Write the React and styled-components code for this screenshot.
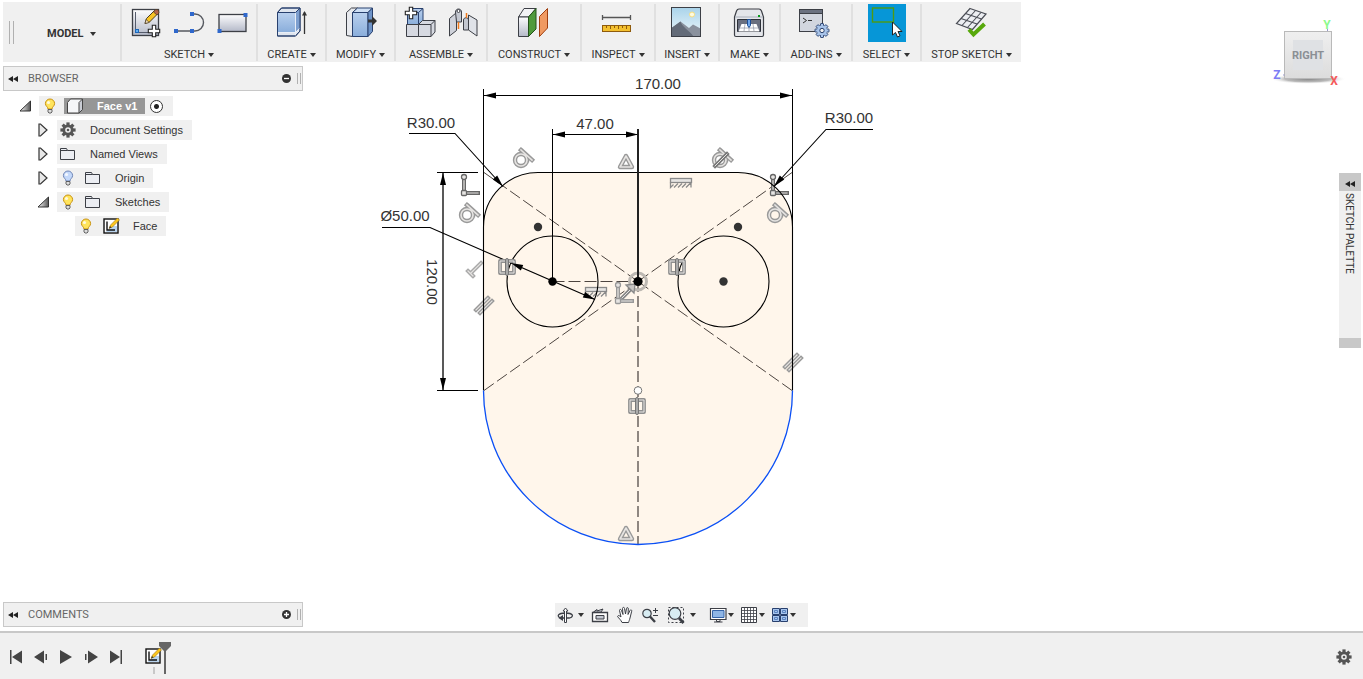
import styled, {createGlobalStyle} from 'styled-components';

const GlobalStyle = createGlobalStyle`
    * {
        box-sizing: border-box;
    }

    body {
        margin: 0;
        background: #fff;
        color: #333;
        font-family: 'Liberation Sans', Arial, sans-serif;
        font-size: 11px;
    }

    svg {
        display: block;
        flex: none;
    }

    button {
        padding: 0;
        border: 0;
        background: none;
        color: inherit;
        font: inherit;
        cursor: pointer;
    }
`;

const Page = styled.div`
    display: flex;
    flex-direction: column;
    min-height: 100vh;
`;

const Workspace = styled.main`
    flex: 1;
    display: grid;
    grid-template-columns: 303px 1fr 303px;
    grid-template-rows: auto 1fr;
`;

/* ---------- toolbar ---------- */

const Toolbar = styled.header`
    grid-column: 1 / 3;
    justify-self: start;
    display: flex;
    height: 60px;
    margin: 2px 3px 4px;
    padding: 2px 0 1px;
    background: #f0f0f0;
`;

const WorkspacePicker = styled.div`
    display: flex;
    align-items: center;
    width: 117px;
    padding-left: 6px;
`;

const Grip = styled.span`
    width: ${({$wide}) => ($wide ? 5 : 4)}px;
    height: ${({$wide}) => ($wide ? 23 : 11)}px;
    border: solid #b0b0b0;
    border-width: 0 1px;
`;

const ModelButton = styled.button`
    display: flex;
    align-items: center;
    gap: 6px;
    margin-left: 33px;
    padding-top: 2px;
    font-family: Roboto, sans-serif;
    font-weight: bold;
`;

const Group = styled.section`
    display: flex;
    flex-direction: column;
    align-items: center;
    width: ${({$width}) => $width}px;
    border-left: 2px solid #e0e0e0;
`;

const GroupIcons = styled.div`
    display: flex;
    gap: 5px;
`;

const ToolButton = styled.button`
    width: 38px;
    height: 38px;
    background: ${({$active}) => ($active ? '#0696d7' : 'none')};
`;

const GroupLabel = styled.button`
    display: flex;
    align-items: center;
    gap: 3px;
    margin-top: 7px;
    font-family: Roboto, sans-serif;
    line-height: 12px;
    white-space: nowrap;
`;

const Caret = styled.span`
    border: 3px solid transparent;
    border-top: 4px solid #333;
    border-bottom: 0;
`;

/* ---------- side panels ---------- */

const Side = styled.aside`
    display: flex;
    flex-direction: column;
    justify-content: space-between;
    padding: 0 0 4px 3px;
`;

const PanelHeader = styled.div`
    display: flex;
    align-items: center;
    height: 25px;
    padding: 0 1px 0 4px;
    border: 1px solid #c8c8c8;
    background: #f0f0f0;
`;

const PanelTitle = styled.h2`
    flex: 1;
    margin: 0 0 0 10px;
    color: #666;
    font-family: Roboto, sans-serif;
    font-size: 11px;
    font-weight: normal;
`;

const PanelToggle = styled.button`
    margin-right: 6px;
`;

const Tree = styled.ul`
    display: flex;
    flex-direction: column;
    gap: 4px;
    margin: 5px 0 0;
    padding: 0;
    list-style: none;
`;

const TreeRow = styled.li`
    display: flex;
    align-items: center;
    height: 20px;
    padding-left: ${({$depth}) => 13 + $depth * 18}px;
`;

const Expander = styled.span`
    display: flex;
    justify-content: center;
    width: 18px;
    margin-right: 5px;
`;

const Pill = styled.div`
    display: flex;
    align-items: center;
    gap: 3px;
    height: 20px;
    padding-right: 9px;
    background: #f0f0f0;
`;

const Slot = styled.span`
    display: flex;
    justify-content: center;
    width: 22px;
`;

const NodeName = styled.span`
    margin-left: 8px;
    white-space: nowrap;
`;

const RootNode = styled.span`
    display: flex;
    align-items: center;
    gap: 3px;
    height: 16px;
    padding-right: 8px;
    background: #969696;
    color: #fff;
    font-weight: bold;
`;

const ActivateRadio = styled.input`
    appearance: none;
    width: 13px;
    height: 13px;
    margin: 0 1px 0 2px;
    border: 1px solid #333;
    border-radius: 50%;
    background: radial-gradient(circle, #222 0 2px, #fff 3px);
`;

/* ---------- canvas ---------- */

const Canvas = styled.section`
    display: flex;
    flex-direction: column;
    align-items: center;
    justify-content: space-between;
    padding-bottom: 4px;
`;

const NavBar = styled.nav`
    display: flex;
    align-items: center;
    gap: 13px;
    height: 24px;
    padding: 0 12px 0 1px;
    background: #f0f0f0;
`;

const NavGroup = styled.div`
    display: flex;
    align-items: center;
    gap: ${({$gap}) => $gap}px;
`;

const NavButton = styled.button`
    display: flex;
    align-items: center;
    gap: ${({$gap}) => $gap}px;
`;

const RightSide = styled.aside`
    grid-column: 3;
    grid-row: 1 / 3;
    display: flex;
    flex-direction: column;
    align-items: flex-end;
    padding: 15px 2px 0 0;
`;

const CubeButton = styled.button`
    margin: 0 16px 83px 0;
`;

const Palette = styled.section`
    display: flex;
    flex-direction: column;
    align-items: center;
    width: 22px;
    height: 175px;
    border-bottom: 10px solid #c8c8c8;
    background: #f0f0f0;
`;

const PaletteToggle = styled.button`
    display: flex;
    align-items: center;
    justify-content: center;
    width: 22px;
    height: 18px;
    padding-top: 3px;
    background: #c8c8c8;
`;

const PaletteTitle = styled.h2`
    margin: 2px 2px 0 0;
    font-family: Roboto, sans-serif;
    font-size: 10px;
    font-weight: normal;
    line-height: 14px;
    writing-mode: vertical-rl;
`;

/* ---------- timeline ---------- */

const Timeline = styled.footer`
    display: flex;
    align-items: center;
    height: 48px;
    padding: 2px 11px 0 4px;
    border-top: 2px solid #c8c8c8;
    background: #f0f0f0;
`;

const Playback = styled.div`
    display: flex;
    gap: 1px;
`;

const PlayButton = styled.button`
    display: flex;
    justify-content: center;
    width: 24px;
`;

const Features = styled.div`
    flex: 1;
    padding-left: 16px;
`;

/* ---------- icons ---------- */

const dark = '#3c3f46';
const navy = '#28406e';

const Gradients = () => (
    <svg width="0" height="0" aria-hidden="true">
        <defs>
            <linearGradient id="steel" x1="0" y1="0" x2="0" y2="1">
                <stop offset="0" stopColor="#fdfdfe"/>
                <stop offset="1" stopColor="#b4b9c8"/>
            </linearGradient>
            <linearGradient id="blue" x1="0" y1="0" x2="0" y2="1">
                <stop offset="0" stopColor="#b9d0ee"/>
                <stop offset="1" stopColor="#8aaedb"/>
            </linearGradient>
            <linearGradient id="sky" x1="0" y1="0" x2="0" y2="1">
                <stop offset="0" stopColor="#a9d3ea"/>
                <stop offset="1" stopColor="#eef7fa"/>
            </linearGradient>
            <linearGradient id="cube" x1="0" y1="0" x2="0" y2="1">
                <stop offset="0" stopColor="#efefef"/>
                <stop offset="1" stopColor="#dcdcdc"/>
            </linearGradient>
            <linearGradient id="wedge" x1="0" y1="0" x2="1" y2="0">
                <stop offset="0" stopColor="#fff"/>
                <stop offset="1" stopColor="#555"/>
            </linearGradient>
            <radialGradient id="shadow">
                <stop offset="0" stopColor="#888"/>
                <stop offset=".6" stopColor="#bbb"/>
                <stop offset="1" stopColor="#fff" stopOpacity="0"/>
            </radialGradient>
        </defs>
    </svg>
);

const Tool = ({children}) => (
    <svg width="38" height="38" viewBox="0 0 38 38" fill="none" aria-hidden="true">{children}</svg>
);

const Plus = ({x, y}) => (
    <path transform={`translate(${x} ${y})`} fill="#fff" stroke="#222" strokeWidth="1.1"
          d="M-1.7-5.7h3.4v4h4v3.4h-4v4h-3.4v-4h-4v-3.4h4z"/>
);

const SketchIcon = () => (
    <Tool>
        <rect x="5.5" y="5.5" width="26" height="26" fill="url(#steel)" stroke={dark} strokeWidth="1.3"/>
        <path d="M8.5 8v21M12 28.5h11" stroke="#555b6b"/>
        <rect x="8.5" y="25.5" width="3" height="3" fill="#5fb0f5" stroke="#1d66b8"/>
        <path d="M18 19.500l1.500-5 8-8 3.500 3-8.500 8.500z" fill="#f7c324" stroke="#4a3a20"/>
        <path d="M26.500 8l2-2.500 3 .5.500 3-2 2z" fill="#b5654a" stroke="#4a3a20" strokeWidth=".7"/>
        <path d="M18 19.500l1.200-4 3 3z" fill="#f3e3c4" stroke="#4a3a20" strokeWidth=".7"/>
        <Plus x={27} y={27}/>
    </Tool>
);

const LineIcon = () => (
    <Tool>
        <path d="M5.5 27H25a8.500 8.500 0 0 0 0-17h-3" stroke="#55585f" strokeWidth="1.4"/>
        <path d="M4 25h4v4H4zM20 25h4v4h-4zM20 8h4v4h-4z" fill="#2f68cc"/>
    </Tool>
);

const RectangleIcon = () => (
    <Tool>
        <rect x="6" y="10.5" width="27" height="17" fill="url(#steel)" stroke={dark} strokeWidth="1.3"/>
        <path d="M30.5 9h4v4h-4zM4.500 25h4v4h-4z" fill="#2f68cc"/>
    </Tool>
);

const ExtrudeIcon = () => (
    <Tool>
        <path d="M4.5 8.500l4-4.500H27v23l-4.500 5h-18z" fill="#dfe5ee" stroke={navy}/>
        <path d="M4.5 8.500h18V28h-18z" fill="url(#blue)"/>
        <path d="M22.5 8.500L27 4v19.500L22.500 28z" fill="#7d9fcf"/>
        <path d="M4.5 28.500h18L27 24M22.500 8.500V32" stroke="#e8eef7"/>
        <path d="M4.5 8.500l4-4.500H27v23l-4.500 5h-18zM4.500 8.500h18L27 4" stroke={navy}/>
        <path d="M31.5 30V8" stroke="#333" strokeWidth="1.3"/>
        <path d="M29 11.500L31.500 7l2.500 4.500z" fill="#333"/>
    </Tool>
);

const PressPullIcon = () => (
    <Tool>
        <path d="M4.5 8.500l5-4.500h6l-5 4.500v24l-6-1z" fill="#e8eaee" stroke={dark}/>
        <path d="M10.5 8.500l5-4.500h15L26 8.500z" fill="#cfe0f5" stroke={navy}/>
        <path d="M10.5 8.500H26v24H10.500z" fill="url(#blue)" stroke={navy}/>
        <path d="M26 8.500L30.500 4v23.500l-4.500 5z" fill="#6f94c8" stroke={navy}/>
        <path d="M26 15.500h4V12l5 5-5 5v-3.500h-4z" fill="#333"/>
    </Tool>
);

const ComponentIcon = () => (
    <Tool>
        <path d="M6.5 8.500l4-4H22v12l-4 4H6.500z" fill="url(#blue)" stroke={navy}/>
        <path d="M17.5 20.500v-12L22 4.500M17.500 8.500h-8" stroke={navy}/>
        <path d="M5.5 20.500h12v12h-12z" fill="#d6d9e1" stroke={dark}/>
        <path d="M17.5 20.500l4-4H34V28l-4 4.500H17.500z" fill="#d6d9e1" stroke={dark}/>
        <path d="M17.5 20.500H30l4-4M30 20.500v12" stroke={dark}/>
        <Plus x={10} y={9}/>
    </Tool>
);

const JointIcon = () => (
    <Tool>
        <path d="M5.5 14.500l7-6v18l-7 5.500z" fill="#cfd2da" stroke={dark}/>
        <path d="M11.5 8c0-4 6-4 6 0v10h-5z" fill="#c4c8d1" stroke={dark}/>
        <circle cx="14.5" cy="7" r="1.5" fill="#fff" stroke={dark}/>
        <path d="M24.5 11l8.500 5v16l-8.500-6z" fill="#dfe2e8" stroke={dark}/>
        <path d="M19.5 16c0-3 5-3 5 0v10h-5z" fill="#c4c8d1" stroke={dark}/>
        <path d="M14.5 18v7M22.500 9v5" stroke="#f07a1c" strokeWidth="1.5"/>
    </Tool>
);

const PlaneIcon = () => (
    <Tool>
        <path d="M3.5 13L9 4.500h12L13.500 13z" fill="#f2f3f5" stroke={dark}/>
        <path d="M3.5 13h10v19.500h-10z" fill="url(#steel)" stroke={dark}/>
        <path d="M13.5 13L21 4.500V25l-7.500 7.500z" fill="#4f9a3c" stroke="#23521a"/>
        <path d="M24.5 12.500l8-8V24l-8 8.500z" fill="#f09a62" stroke="#a03f10"/>
    </Tool>
);

const MeasureIcon = () => (
    <Tool>
        <path d="M3.5 13.500h28M3.500 11v5M31.500 11v5" stroke="#555" strokeWidth="1.3"/>
        <rect x="3.5" y="21.5" width="28" height="6" fill="#f3c02f" stroke="#8f5b0c"/>
        <path d="M7.5 22v2M11.500 22v3M15.500 22v2M19.500 22v3M23.500 22v2M27.500 22v3" stroke="#8f5b0c"/>
    </Tool>
);

const CanvasIcon = () => (
    <Tool>
        <rect x="3.5" y="3.5" width="29" height="29" fill="url(#sky)"/>
        <circle cx="24" cy="10.5" r="2.5" fill="#fffbe0" stroke="#f6dd7e"/>
        <path d="M3.5 24l9-6.500L21 24l4-3.500 7.500 4v8h-29z" fill="#8a919d"/>
        <path d="M12.5 17.500c1 5 9 9 13 15h-22V24z" fill="#636b78"/>
        <rect x="3.5" y="3.5" width="29" height="29" stroke={dark}/>
    </Tool>
);

const PrinterIcon = () => (
    <Tool>
        <path d="M3.5 13l2-6c.5-1.300 1-2 2.500-2h20c1.500 0 2 .7 2.500 2l2 6v18c0 1-.5 1.500-1.500 1.500H5c-1 0-1.500-.5-1.500-1.500z"
              fill="#e4e6ea" stroke={dark} strokeWidth="1.2"/>
        <path d="M4 13h28" stroke="#aab0bb"/>
        <path d="M27 11h2v2h-2z" fill="#0a9a1c"/>
        <path d="M6.5 15.500h23v12h-23z" fill="#6a7080" stroke="#2d313a"/>
        <path d="M10.5 20h15l3 7.500h-21z" fill="#fff"/>
        <path d="M9 24h18M14 20l-1 7M18 20v7M22 20l1 7" stroke="#9aa0ac" strokeWidth=".8"/>
        <path d="M16.5 15.500h3v6l-1.500 2-1.500-2z" fill="#6ea4e8" stroke="#1e4f96"/>
    </Tool>
);

const gearTeeth = [0, 45, 90, 135, 180, 225, 270, 315];

const ScriptIcon = () => (
    <Tool>
        <rect x="2.5" y="5.5" width="23" height="22" fill="#d2d6df" stroke={dark}/>
        <path d="M2.5 5.500h23v4h-23z" fill="#6b7180" stroke={dark}/>
        <path d="M6 14l3.500 2.500L6 19M11 16.500h4" stroke="#333"/>
        <g transform="translate(25 26.5)">
            {gearTeeth.map((a) => (
                <rect key={a} x="-1.5" y="-7" width="3" height="4" rx=".5" fill="#a8c4ea" stroke={navy}
                      strokeWidth=".9" transform={`rotate(${a})`}/>
            ))}
            <circle r="5" fill="#a8c4ea"/>
            <circle r="2.2" fill="#f0f0f0" stroke={navy}/>
        </g>
    </Tool>
);

const SelectIcon = () => (
    <Tool>
        <rect x="4.5" y="4" width="21" height="14" stroke="#4f9a10" strokeWidth="1.4"/>
        <path d="M24.5 18v13l3-2.500 2 4.500 2.500-1.200-2-4.300h4z" fill="#fff" stroke="#222"/>
    </Tool>
);

const StopSketchIcon = () => (
    <Tool>
        <path d="M17 4.500L33 10 19.500 25.500l-16-6z" fill="#eceef2" stroke="#4a4d55" strokeWidth="1.2"/>
        <path d="M22.5 6.500L9 21.500M28 8.500L14.500 23.500M12.500 9.500l16 5.500M8 14.500l16 5.500" stroke="#4a4d55" strokeWidth="1.1"/>
        <path d="M16 25.500l4.500 5L31.500 20" stroke="#57a80b" strokeWidth="4"/>
    </Tool>
);

const RewindIcon = () => (
    <svg width="10" height="6" viewBox="0 0 10 6" aria-hidden="true">
        <path d="M5 0v6L0 3zM10 0v6L5 3z" fill="#222"/>
    </svg>
);

const CircleSign = ({plus}) => (
    <svg width="9" height="9" viewBox="0 0 9 9" aria-hidden="true">
        <circle cx="4.5" cy="4.5" r="4.5" fill="#333"/>
        <path d={plus ? 'M2 4.5h5M4.500 2v5' : 'M2 4.500h5'} stroke="#fff" strokeWidth="1.3"/>
    </svg>
);

const Bulb = ({off}) => (
    <svg width="12" height="16" viewBox="0 0 12 16" aria-hidden="true">
        <path d="M6 1a4.600 4.600 0 0 0-4.600 4.600C1.400 8 4 9 4 11h4c0-2 2.600-3 2.600-5.400A4.600 4.600 0 0 0 6 1z"
              fill={off ? '#c3d8fa' : '#ffe45c'} stroke={off ? '#6d84b5' : '#c9920e'}/>
        <circle cx="4.5" cy="4.5" r="1.6" fill="#fff" opacity=".8"/>
        <path d="M4 11.500h4V14l-1 1H5l-1-1z" fill="#ddd" stroke="#555" strokeWidth=".9"/>
    </svg>
);

const Folder = () => (
    <svg width="16" height="14" viewBox="0 0 16 14" aria-hidden="true">
        <path d="M.5 12.500v-11h6l1 2h7v9z" fill="#eceef3" stroke={dark}/>
        <path d="M1 3.500h6.500" stroke={dark}/>
    </svg>
);

const BodyIcon = () => (
    <svg width="16" height="16" viewBox="0 0 16 16" aria-hidden="true">
        <path d="M.5 4.500l3-3.500h12v10.500L12 15H.5z" fill="#f5f6f8" stroke="#444"/>
        <path d="M12 4.500L15.500 1v10.500L12 15z" fill="#c9ccd4" stroke="#444"/>
    </svg>
);

const Gear = () => (
    <svg width="16" height="16" viewBox="-8 -8 16 16" aria-hidden="true">
        {gearTeeth.map((a) => (
            <rect key={a} x="-1.6" y="-7.6" width="3.2" height="4" fill="#555" transform={`rotate(${a})`}/>
        ))}
        <circle r="4.2" fill="none" stroke="#555" strokeWidth="2.8"/>
        <circle r="1.3" fill="#555"/>
    </svg>
);

const SketchArt = () => (
    <>
        <rect x="1" y="1" width="14" height="14" fill="#fff" stroke="#111" strokeWidth="1.4"/>
        <path d="M8 8h6v6H2.500L8 10z" fill="#b9d4ee"/>
        <path d="M4 3.500v8.500h8" fill="none" stroke="#111" strokeWidth="1.4"/>
        <path d="M6 10.500l1.500-3.500 7-7 2 2-7 7z" fill="#fbc61e" stroke="#8a6410" strokeWidth=".5"/>
        <path d="M6 10.500l1-2.500 1.500 1.500z" fill="#333"/>
    </>
);

const SmallSketch = () => (
    <svg width="17" height="16" viewBox="0 0 17 16" aria-hidden="true"><SketchArt/></svg>
);

const Closed = () => (
    <svg width="10" height="14" viewBox="0 0 10 14" aria-hidden="true">
        <path d="M1 1h1.500L9 7l-6.500 6H1z" fill="#e8e8e8" stroke="#333" strokeWidth="1.2"/>
    </svg>
);

const Opened = () => (
    <svg width="13" height="12" viewBox="0 0 13 12" aria-hidden="true">
        <path d="M11.5 1v10H1z" fill="url(#wedge)" stroke="#333"/>
    </svg>
);

const Nav = ({width = 18, children}) => (
    <svg width={width} height="18" viewBox={`0 0 ${width} 18`} fill="none" stroke={dark} aria-hidden="true">
        {children}
    </svg>
);

const OrbitIcon = () => (
    <Nav>
        <path d="M5 12C0 10.500 2 7 9.500 7s9 3.500 4 5H5" strokeWidth="1.3"/>
        <path d="M7 9v6l-4.500-3z" fill={dark} stroke="none"/>
        <path d="M8.5 16.500V5H7l2.500-3L12 5h-1.500v11.500z" fill="#fff"/>
    </Nav>
);

const LookAtIcon = () => (
    <Nav>
        <path d="M1.5 6.500h15v9h-15z" fill="#fff" strokeWidth="1.3"/>
        <path d="M5 9.500h8V13H5z" fill="#c4c8d1"/>
        <path d="M2.5 6L6 3.500V5l6-2-2 3z" fill="#d6d9e1"/>
    </Nav>
);

const PanIcon = () => (
    <Nav>
        <path fill="#fff" d="M6 16.500c-1-2.500-3-4-4.500-6 .5-1.500 2-1 3.500.5L3.500 4.500c0-1.500 1.500-1.500 2 0L7 8.500l-.5-6c0-1.500 2-1.500 2 0l1 5.500 1-5.500c.3-1.500 2-1 1.800.5L12 8.500l2-4c.7-1.300 2-.5 1.700.7L14 12c-.5 2-1 3-1.500 4.500z"/>
    </Nav>
);

const ZoomIcon = () => (
    <Nav>
        <circle cx="6" cy="7.5" r="4.2" fill="#d8edf3" strokeWidth="1.2"/>
        <path d="M9 10.500l5 5.500" strokeWidth="2.4"/>
        <path d="M12 4.500h5M14.500 2v5M12 9.500h5"/>
    </Nav>
);

const ZoomWindowIcon = () => (
    <Nav width={20}>
        <path d="M2.5 1.500h15v15h-15z" strokeDasharray="2 2"/>
        <circle cx="9" cy="7.5" r="5.8" fill="#d8edf3" strokeWidth="1.2"/>
        <path d="M13 12l4.500 5" strokeWidth="2.8"/>
    </Nav>
);

const DisplayIcon = () => (
    <Nav>
        <path d="M1.5 2.500H17v11H1.500z" fill="#fff" strokeWidth="1.2"/>
        <path d="M3.5 4.500H15v7H3.500z" fill="#8fb6e6" stroke="#3564a8"/>
        <path d="M7.5 13.500H11v2H7.500zM5 16h8.500"/>
    </Nav>
);

const GridIcon = () => (
    <Nav>
        <path d="M1.5 1.500h15v15h-15z" fill="#fff"/>
        <path d="M4.500 1.500v15M7.500 1.500v15M10.500 1.500v15M13.500 1.500v15M1.500 4.500h15M1.500 7.500h15M1.500 10.500h15M1.500 13.500h15"
              strokeWidth=".8"/>
    </Nav>
);

const ViewportsIcon = () => (
    <Nav>
        <path d="M1.5 2.500h7v6h-7zM9.500 2.500h7v6h-7zM1.500 9.500h7v6h-7zM9.500 9.500h7v6h-7z" fill="#a9c6ee" stroke={navy}/>
        <path d="M3.5 4.500h3v2h-3zM11.500 4.500h3v2h-3zM3.500 11.500h3v2h-3zM11.500 11.500h3v2h-3z" stroke="#5b83bf"/>
    </Nav>
);

const ViewCube = () => (
    <svg width="77" height="75" viewBox="1268 15 77 75" aria-hidden="true">
        <ellipse cx="1308" cy="79" rx="38" ry="5" fill="url(#shadow)"/>
        <rect x="1284.5" y="31.5" width="47" height="47" fill="url(#cube)" stroke="#b9b9b9"/>
        <rect x="1293" y="40" width="30" height="30" fill="#dfe1e4"/>
        <g fontFamily="Roboto, sans-serif" fontWeight="bold" textAnchor="middle">
            <text x="1308" y="59" fontSize="11" fill="#8b8f94">RIGHT</text>
            <text x="1327" y="29" fontSize="12" fill="#8dfa8d">Y</text>
            <text x="1277" y="79" fontSize="12" fill="#7d7df5">Z</text>
            <text x="1334" y="85" fontSize="12" fill="#f55a5a">X</text>
        </g>
        <path d="M1283 75h1.500M1327.500 29v2" stroke="#99c"/>
    </svg>
);

/* ---------- the sketch ---------- */

// constraint marks are hollow strokes: a wide grey line with a light core
const Mark = ({d, x = 0, y = 0, color = '#999', width = 4.4}) => (
    <g transform={`translate(${x} ${y})`} fill="none" strokeLinecap="square" strokeLinejoin="round">
        <path d={d} stroke={color} strokeWidth={width}/>
        <path d={d} stroke="#e6e4e2" strokeWidth={width - 2.8}/>
    </g>
);

const tangent = 'M6 0A6 6 0 1 1-6 0A6 6 0 1 1 6 0M0-10L11 0';
const triangle = 'M0 2L-6 13H6z';
const parallel = 'M0 0L12-12M4 3L16-9';
const symmetry = 'M-2-6H-7V6H-2M2-6H7V6H2';
const corner = 'M0 0V16H14';

const Tangent = ({x, y}) => <Mark d={tangent} x={x} y={y}/>;

const Corner = ({x, y, color = '#666'}) => (
    <g>
        <Mark d={corner} x={x} y={y} color={color} width={4}/>
        <g transform={`translate(${x} ${y})`} fill="#e6e4e2" stroke={color} strokeWidth="1.3">
            <circle r="2.5"/>
            <rect x="-2.5" y="13.5" width="5" height="5" rx="1"/>
        </g>
    </g>
);

const Ruler = ({x, y}) => (
    <g transform={`translate(${x} ${y})`} fill="#e6e4e2" stroke="#8a8a8a" strokeWidth="1.3">
        <rect x=".5" y=".5" width="21" height="4"/>
        <path d="M.5 4.500v5l3-3M4 9.500l4-4M8 9.500l4-4M12 9.500l4-4M16 9.500l5-5v5" fill="none"/>
    </g>
);

const Symmetry = ({x, y}) => (
    <g>
        <Mark d={symmetry} x={x} y={y} color="#8f8f8f" width={3.8}/>
        <rect x={x - 1.5} y={y - 8.5} width="3" height="17" rx="1.5" fill="#aaa" stroke="#777"/>
    </g>
);

const Arrow = ({x, y, angle}) => (
    <path d="M0 0L-12-3V3z" fill="#000" transform={`translate(${x} ${y}) rotate(${angle})`}/>
);

const Drawing = () => (
    <svg width="623" height="490" viewBox="370 66 623 490" role="img" aria-label="Face sketch">
        <path d="M483.5 390.500V227A54.500 54.500 0 0 1 538 172.500H738A54.500 54.500 0 0 1 792.500 227V390.500A154.500 154 0 0 1 483.500 390.500z"
              fill="#fff6eb"/>
        <g fill="none" stroke="#4d4540" strokeDasharray="12 4">
            <path d="M484 172.500L638 281.500M792 172.500L638 281.500M484 390.500L638 281.500M792 390.500L638 281.500M552.500 281.500H638"/>
            <path d="M638 281V544" stroke="#8f8781" strokeWidth="2" strokeDasharray="11 4"/>
        </g>

        <Tangent x={521} y={160}/>
        <Tangent x={467} y={215}/>
        <Tangent x={720} y={160}/>
        <Mark d="M0 0L12-12" x={715} y={166} color="#777" width={3.8}/>
        <Tangent x={775} y={215}/>
        <Mark d={triangle} x={626} y={154}/>
        <Mark d={triangle} x={626} y={526}/>
        <Ruler x={670} y={178}/>
        <Ruler x={585} y={287}/>
        <Mark d="M0 0L5 5M3 2L13-8" x={468} y={271} color="#aaa" width={4}/>
        <Mark d={parallel} x={476} y={310} width={4}/>
        <Mark d={parallel} x={785} y={367} width={4}/>
        <Corner x={464} y={177}/>
        <Corner x={773} y={177}/>
        <circle cx="638" cy="281.5" r="8.5" fill="none" stroke="#bdb8b2" strokeWidth="3"/>
        <Mark d="M0 0L10-10" x={622} y={298} color="#888" width={3.8}/>
        <path d="M626 285l8 8 1-9z" fill="#c8c5c2" stroke="#888" strokeWidth="1.3"/>
        <Corner x={618} y={285} color="#999"/>

        <g fill="none" stroke="#000">
            <path d="M483.5 390.500V227A54.500 54.500 0 0 1 538 172.500H738A54.500 54.500 0 0 1 792.500 227V390.500" strokeWidth="1.1"/>
            <path d="M483.5 390.500A154.500 154 0 0 0 792.500 390.500" stroke="#0a4ff5" strokeWidth="1.3"/>
            <circle cx="552.5" cy="281.5" r="45.5" strokeWidth="1.1"/>
            <circle cx="723.5" cy="281.5" r="45.5" strokeWidth="1.1"/>
            <path d="M483.5 89V227M792.500 89V227M484 95.500H792"/>
            <path d="M552.5 129V281M553 134.500H638"/>
            <path d="M638 129V281" stroke="#222" strokeWidth="2"/>
            <path d="M437 172.500H478M437 390.500H478"/>
            <path d="M443 173V390" stroke="#222" strokeWidth="1.5"/>
            <path d="M409 133.500H455L503 186.500M873 129.500H826L774 186.500M382 227.500H430L595 299.500" strokeWidth="1.1"/>
        </g>
        <Arrow x={484} y={95.5} angle={180}/>
        <Arrow x={792} y={95.5} angle={0}/>
        <Arrow x={553} y={134.5} angle={180}/>
        <Arrow x={638} y={134.5} angle={0}/>
        <Arrow x={443} y={173} angle={-90}/>
        <Arrow x={443} y={390} angle={90}/>
        <Arrow x={503} y={186.5} angle={48}/>
        <Arrow x={774} y={186.5} angle={132}/>
        <Symmetry x={507} y={267}/>
        <Symmetry x={677} y={267}/>
        <Symmetry x={637} y={406}/>
        <Arrow x={511} y={263} angle={203}/>
        <Arrow x={595} y={299.5} angle={23}/>

        <circle cx="552.5" cy="281.5" r="4.2"/>
        <circle cx="638" cy="281.5" r="4.6"/>
        <g fill="#333">
            <circle cx="723.5" cy="281.5" r="4.2"/>
            <circle cx="538" cy="227" r="4.2"/>
            <circle cx="738" cy="227" r="4.2"/>
        </g>
        <circle cx="638" cy="390.5" r="3.8" fill="#fff" stroke="#777"/>

        <g fontFamily="'Liberation Sans', Arial, sans-serif" fontSize="15" fill="#333" textAnchor="middle">
            <text x="658" y="89">170.00</text>
            <text x="595" y="129">47.00</text>
            <text x="431" y="128">R30.00</text>
            <text x="849" y="123">R30.00</text>
            <text x="405" y="221">Ø50.00</text>
            <text transform="translate(427 282) rotate(90)">120.00</text>
        </g>
    </svg>
);

/* ---------- data ---------- */

const groups = [
    {name: 'SKETCH', width: 136, tools: [['Create sketch', SketchIcon], ['Line', LineIcon], ['Rectangle', RectangleIcon]]},
    {name: 'CREATE', width: 69, tools: [['Extrude', ExtrudeIcon]]},
    {name: 'MODIFY', width: 69, tools: [['Press pull', PressPullIcon]]},
    {name: 'ASSEMBLE', width: 92, tools: [['New component', ComponentIcon], ['Joint', JointIcon]]},
    {name: 'CONSTRUCT', width: 94, tools: [['Offset plane', PlaneIcon]]},
    {name: 'INSPECT', width: 74, tools: [['Measure', MeasureIcon]]},
    {name: 'INSERT', width: 64, tools: [['Attached canvas', CanvasIcon]]},
    {name: 'MAKE', width: 61, tools: [['3D print', PrinterIcon]]},
    {name: 'ADD-INS', width: 72, tools: [['Scripts and add-ins', ScriptIcon]]},
    {name: 'SELECT', width: 69, tools: [['Select', SelectIcon]], active: true},
    {name: 'STOP SKETCH', width: 101, tools: [['Stop sketch', StopSketchIcon]]},
];

const nodes = [
    {name: 'Document Settings', depth: 1, expander: <Closed/>, icons: [<Gear/>]},
    {name: 'Named Views', depth: 1, expander: <Closed/>, icons: [<Folder/>]},
    {name: 'Origin', depth: 1, expander: <Closed/>, icons: [<Bulb off/>, <Folder/>]},
    {name: 'Sketches', depth: 1, expander: <Opened/>, icons: [<Bulb/>, <Folder/>]},
    {name: 'Face', depth: 2, expander: null, icons: [<Bulb/>, <SmallSketch/>]},
];

const playback = [
    ['Go to start', 'M2 1h1.500v14H2zM14 1.500v13L4 8z'],
    ['Step back', 'M11 1.500v13L1 8zM12.500 5H14v6h-1.500z'],
    ['Play', 'M2 1v14l12-7z'],
    ['Step forward', 'M2 5h1.500v6H2zM5 1.500v13L15 8z'],
    ['Go to end', 'M2 1.500v13L12 8zM12.500 1H14v14h-1.500z'],
];

const Panel = ({title, plus}) => (
    <PanelHeader>
        <RewindIcon/>
        <PanelTitle>{title}</PanelTitle>
        <PanelToggle aria-label={`Toggle ${title.toLowerCase()}`}><CircleSign plus={plus}/></PanelToggle>
        <Grip/>
    </PanelHeader>
);

const App = () => {
    return (
        <Page>
            <GlobalStyle/>
            <Gradients/>
            <Workspace>
                <Toolbar>
                    <WorkspacePicker>
                        <Grip $wide/>
                        <ModelButton>MODEL <Caret/></ModelButton>
                    </WorkspacePicker>
                    {groups.map(({name, width, tools, active}) => (
                        <Group key={name} $width={width}>
                            <GroupIcons>
                                {tools.map(([label, Icon]) => (
                                    <ToolButton key={label} aria-label={label} $active={active}><Icon/></ToolButton>
                                ))}
                            </GroupIcons>
                            <GroupLabel>{name} <Caret/></GroupLabel>
                        </Group>
                    ))}
                </Toolbar>

                <Side>
                    <div>
                        <Panel title="BROWSER"/>
                        <Tree>
                            <TreeRow $depth={0}>
                                <Expander><Opened/></Expander>
                                <Pill>
                                    <Slot><Bulb/></Slot>
                                    <RootNode>
                                        <Slot><BodyIcon/></Slot>
                                        <NodeName>Face v1</NodeName>
                                    </RootNode>
                                    <ActivateRadio type="radio" aria-label="Activate Face v1" defaultChecked/>
                                </Pill>
                            </TreeRow>
                            {nodes.map(({name, depth, expander, icons}) => (
                                <TreeRow key={name} $depth={depth}>
                                    <Expander>{expander}</Expander>
                                    <Pill>
                                        {icons.map((icon, i) => <Slot key={i}>{icon}</Slot>)}
                                        <NodeName>{name}</NodeName>
                                    </Pill>
                                </TreeRow>
                            ))}
                        </Tree>
                    </div>
                    <Panel title="COMMENTS" plus/>
                </Side>

                <Canvas>
                    <Drawing/>
                    <NavBar>
                        <NavGroup $gap={7}>
                            <NavButton $gap={4} aria-label="Orbit"><OrbitIcon/><Caret/></NavButton>
                            <NavButton aria-label="Look at"><LookAtIcon/></NavButton>
                            <NavButton aria-label="Pan"><PanIcon/></NavButton>
                            <NavButton aria-label="Zoom"><ZoomIcon/></NavButton>
                            <NavButton $gap={4} aria-label="Zoom window"><ZoomWindowIcon/><Caret/></NavButton>
                        </NavGroup>
                        <NavGroup $gap={6}>
                            <NavButton $gap={1} aria-label="Display settings"><DisplayIcon/><Caret/></NavButton>
                            <NavButton $gap={1} aria-label="Grid and snaps"><GridIcon/><Caret/></NavButton>
                            <NavButton $gap={1} aria-label="Viewports"><ViewportsIcon/><Caret/></NavButton>
                        </NavGroup>
                    </NavBar>
                </Canvas>

                <RightSide>
                    <CubeButton aria-label="View cube"><ViewCube/></CubeButton>
                    <Palette>
                        <PaletteToggle aria-label="Expand palette"><RewindIcon/></PaletteToggle>
                        <PaletteTitle>SKETCH PALETTE</PaletteTitle>
                    </Palette>
                </RightSide>
            </Workspace>

            <Timeline>
                <Playback>
                    {playback.map(([label, d]) => (
                        <PlayButton key={label} aria-label={label}>
                            <svg width="16" height="16" viewBox="0 0 16 16" aria-hidden="true"><path d={d} fill="#444"/></svg>
                        </PlayButton>
                    ))}
                </Playback>
                <Features>
                    <svg width="30" height="40" viewBox="144 637 30 40" aria-hidden="true">
                        <g transform="translate(145 648)"><SketchArt/></g>
                        <path d="M153 667h2v7h-2z" fill="#c8c8c8"/>
                        <path d="M159 642h12v4l-5 5v23h-2v-23l-5-5z" fill="#666"/>
                    </svg>
                </Features>
                <button aria-label="Timeline settings"><Gear/></button>
            </Timeline>
        </Page>
    );
};

export default App;
